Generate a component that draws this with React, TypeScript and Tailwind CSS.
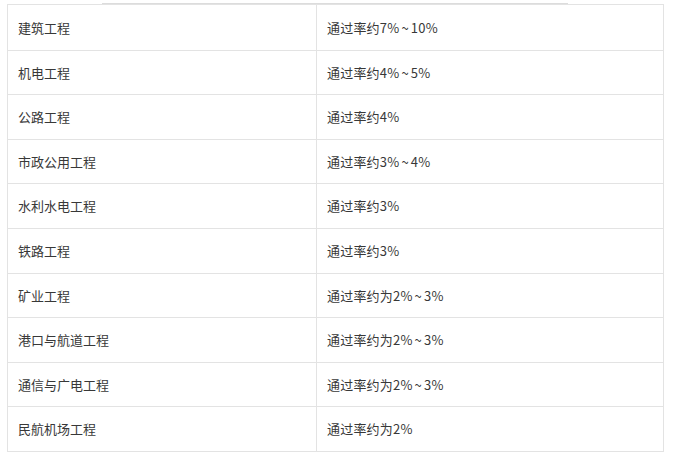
import React from "react";

const rows: [string, string][] = [
  ["建筑工程", "通过率约7%~10%"],
  ["机电工程", "通过率约4%~5%"],
  ["公路工程", "通过率约4%"],
  ["市政公用工程", "通过率约3%~4%"],
  ["水利水电工程", "通过率约3%"],
  ["铁路工程", "通过率约3%"],
  ["矿业工程", "通过率约为2%~3%"],
  ["港口与航道工程", "通过率约为2%~3%"],
  ["通信与广电工程", "通过率约为2%~3%"],
  ["民航机场工程", "通过率约为2%"],
];

function Val({ text }: { text: string }) {
  const parts = text.split("~");
  if (parts.length === 1) return <>{text}</>;
  return (
    <>
      {parts[0]}
      <span className="px-[2px]">~</span>
      {parts[1]}
    </>
  );
}

export default function App() {
  return (
    <div
      className="w-[673px] h-[456px] bg-white pt-[4px] pl-[7px]"
      style={{ fontFamily: '"Noto Sans CJK SC", "Liberation Sans", sans-serif' }}
    >
      <div className="relative w-[657px]">
        <div className="absolute left-[95px] top-[-1px] w-[466px] h-[1px] bg-[#dcdcdc]" />
        <div className="border border-[#e3e3e3] flex flex-col">
          {rows.map(([a, b], i) => (
            <div
              key={i}
              className={`flex h-[44.6px] ${i > 0 ? "border-t border-[#e3e3e3]" : ""}`}
            >
              <div className="w-[309px] flex items-center pl-[10px] border-r border-[#e3e3e3] text-[13px] text-[#383838]">
                {a}
              </div>
              <div className="flex-1 flex items-center pl-[10px] text-[13px] text-[#383838] tracking-[0.2px]">
                <Val text={b} />
              </div>
            </div>
          ))}
        </div>
      </div>
    </div>
  );
}
